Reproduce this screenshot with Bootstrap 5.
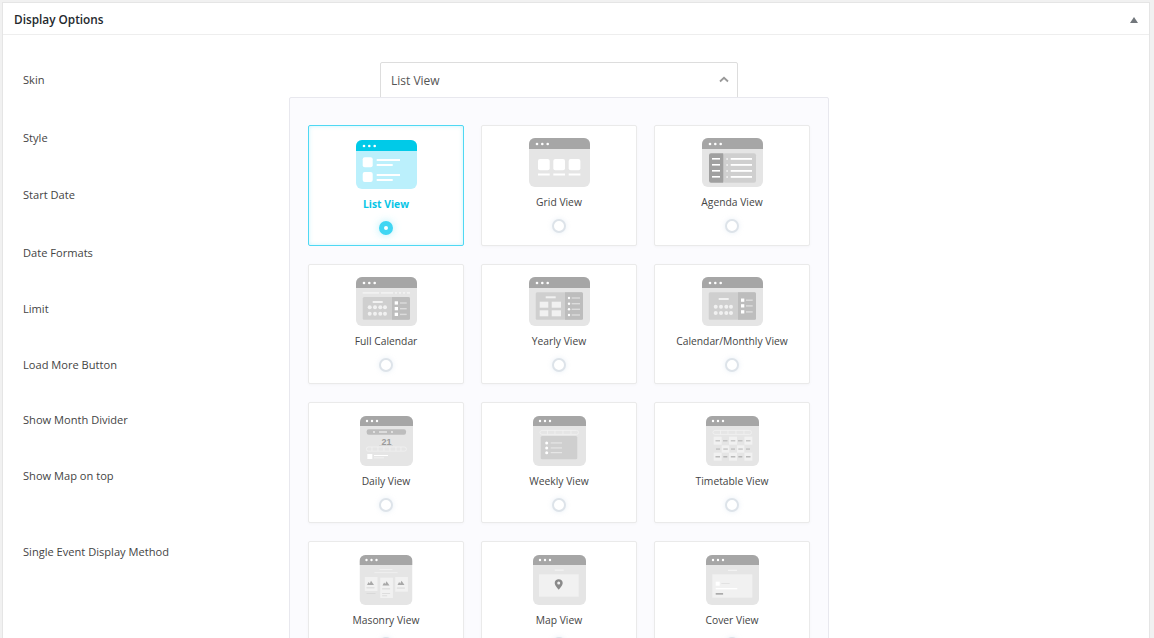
<!DOCTYPE html>
<html lang="en">
<head>
<meta charset="utf-8">
<title>Display Options</title>
<link href="https://cdn.jsdelivr.net/npm/bootstrap@5.3.0/dist/css/bootstrap.min.css" rel="stylesheet">
<style>
html,body{height:638px;overflow:hidden}
body{background:#f1f1f1;font-family:"Open Sans",Lato,sans-serif;color:#444;font-size:11px;padding:2px 4px 0 2px}
.opt-panel{background:#fff;border:1px solid #e5e5e5;height:700px;position:relative;border-radius:0}
.opt-head{height:32px;border-bottom:1px solid #eee;padding:2px 11px 0;display:flex;align-items:center;justify-content:space-between}
.opt-title{font-size:11.8px;font-weight:600;color:#23282d}
.opt-tri{width:0;height:0;border-left:4px solid transparent;border-right:4px solid transparent;border-bottom:6px solid #72777c;margin-right:0}
.opt-body{padding:36px 0 0 20px}
.opt-row{font-size:11.1px;line-height:17px;color:#444}
.r1{height:58px}.r2{height:57px}.r3{height:58px}.r4{height:56px}.r5{height:56px}.r6{height:55px}.r7{height:56px}.r8{height:76px}
.sel-box{position:absolute;left:377px;top:59px;width:358px;height:44px;border:1px solid #ddd;border-radius:2px;padding:8px 10px;font-size:12px;line-height:19px;color:#555;background:#fff}
.sel-caret{position:absolute;right:8px;top:13px}
.pop-menu{position:absolute;left:286px;top:94px;width:540px;height:620px;background:#fbfbfe;border:1px solid #e8e8ee;border-radius:2px;padding:27px 18px;display:grid;grid-template-columns:repeat(3,156px);column-gap:17px;row-gap:18px;grid-auto-rows:120.7px}
.sk-card{background:#fff;border:1px solid #eaeaea;border-radius:2px;box-shadow:0 1px 3px rgba(0,0,0,.03);display:flex;flex-direction:column;align-items:center;padding-top:12px;font-size:10.3px;color:#444}
.sk-card svg{display:block;height:49px;flex:none}
.sk-tall{padding-top:13px}
.sk-card.sk-tall svg{height:50px}
.sk-name{margin-top:7px;line-height:17px;white-space:nowrap;height:17px}
.sk-radio{width:14px;height:14px;border:2px solid #dde3e9;border-radius:50%;margin-top:8px;background:#fff;box-shadow:0 0 5px rgba(190,205,225,.35)}
.sk-on{border-color:#4fd8f3;box-shadow:inset 0 0 4px rgba(79,216,243,.3);padding-top:14px}
.sk-on .sk-name{color:#07c5e6;font-weight:700}
.sk-on .sk-radio{border:5px solid #40d6f3;background:#fff;box-shadow:0 0 8px rgba(64,214,243,.4)}
.i-bg{fill:#e5e5e5}.i-hd{fill:#a6a6a6}.i-w{fill:#fff}
.i-m{fill:#cfcfcf}.i-d{fill:#bdbdbd}.i-l{fill:#f1f1f1}
.i21{font-family:"Liberation Sans",sans-serif;font-size:9px;font-weight:700;fill:#9a9a9a;text-anchor:middle}
</style>
</head>
<body>
<svg width="0" height="0" class="position-absolute">
  <symbol id="w61" viewBox="0 0 61 49"><rect class="i-bg" width="61" height="49" rx="6"/><path class="i-hd" d="M0 11V6a6 6 0 0 1 6-6h49a6 6 0 0 1 6 6v5z"/><circle class="i-w" cx="8" cy="6" r="1.3"/><circle class="i-w" cx="13.3" cy="6" r="1.3"/><circle class="i-w" cx="18.7" cy="6" r="1.3"/></symbol>
  <symbol id="w53" viewBox="0 0 53 50"><rect class="i-bg" width="53" height="50" rx="6"/><path class="i-hd" d="M0 10V6a6 6 0 0 1 6-6h41a6 6 0 0 1 6 6v4z"/><circle class="i-w" cx="7" cy="5" r="1.2"/><circle class="i-w" cx="12" cy="5" r="1.2"/><circle class="i-w" cx="17" cy="5" r="1.2"/></symbol>
  <symbol id="cells" viewBox="0 0 53 50"><g fill="none" stroke="#f1f1f1" stroke-width=".8"><rect x="7" y="14.4" width="38.5" height="4" rx="2"/><path d="M14.5 14.4v4M22 14.4v4M30 14.4v4M38 14.4v4"/></g></symbol>
</svg>
<div class="card opt-panel">
  <div class="opt-head"><span class="opt-title">Display Options</span><span class="opt-tri"></span></div>
  <div class="opt-body">
    <div class="opt-row r1">Skin</div>
    <div class="opt-row r2">Style</div>
    <div class="opt-row r3">Start Date</div>
    <div class="opt-row r4">Date Formats</div>
    <div class="opt-row r5">Limit</div>
    <div class="opt-row r6">Load More Button</div>
    <div class="opt-row r7">Show Month Divider</div>
    <div class="opt-row r8">Show Map on top</div>
    <div class="opt-row">Single Event Display Method</div>
  </div>
  <div class="sel-box">List View
    <svg class="sel-caret" width="10" height="7" viewBox="0 0 10 7"><path d="M1 5.5 5 1.8l4 3.7" fill="none" stroke="#999" stroke-width="1.8"/></svg>
  </div>
  <div class="pop-menu">
    <div class="sk-card sk-on">
      <svg width="61" height="49" viewBox="0 0 61 49">
        <rect width="61" height="49" rx="6" fill="#bbf0fc"/><path fill="#00cae8" d="M0 11V6a6 6 0 0 1 6-6h49a6 6 0 0 1 6 6v5z"/>
        <g class="i-w"><circle cx="8" cy="6" r="1.3"/><circle cx="13.3" cy="6" r="1.3"/><circle cx="18.7" cy="6" r="1.3"/>
        <rect x="6.7" y="17.3" width="10" height="10" rx="2"/><rect x="6.7" y="32" width="10" height="10" rx="2"/>
        <rect x="20.7" y="19" width="23.3" height="2"/><rect x="20.7" y="24" width="16" height="2"/><rect x="20.7" y="34" width="23.3" height="2"/><rect x="20.7" y="39" width="16" height="2"/></g>
      </svg>
      <div class="sk-name">List View</div><div class="sk-radio"></div>
    </div>
    <div class="sk-card">
      <svg width="61" height="49" viewBox="0 0 61 49"><use href="#w61"/>
        <g class="i-w"><rect x="9" y="21" width="11.7" height="11.3" rx="2"/><rect x="24.3" y="21" width="11.7" height="11.3" rx="2"/><rect x="39.7" y="21" width="11.7" height="11.3" rx="2"/>
        <rect x="9" y="35.5" width="11.7" height="2"/><rect x="24.3" y="35.5" width="11.7" height="2"/><rect x="39.7" y="35.5" width="11.7" height="2"/></g>
      </svg>
      <div class="sk-name">Grid View</div><div class="sk-radio"></div>
    </div>
    <div class="sk-card">
      <svg width="61" height="49" viewBox="0 0 61 49"><use href="#w61"/>
        <rect x="21" y="15.3" width="33" height="29.4" rx="2" class="i-m"/><path fill="#a0a0a0" d="M9 15.3h12.3v29.4H9a2 2 0 0 1-2-2V17.3a2 2 0 0 1 2-2z"/>
        <g class="i-w"><rect x="10" y="20" width="8" height="1.6"/><rect x="10" y="26" width="8" height="1.6"/><rect x="10" y="32" width="8" height="1.6"/><rect x="10" y="38" width="8" height="1.6"/>
        <rect x="24.4" y="20.3" width="1.4" height="1.4"/><rect x="24.4" y="26.3" width="1.4" height="1.4"/><rect x="24.4" y="32.3" width="1.4" height="1.4"/><rect x="24.4" y="38.3" width="1.4" height="1.4"/>
        <rect x="28.7" y="20" width="21.3" height="1.8"/><rect x="28.7" y="26" width="21.3" height="1.8"/><rect x="28.7" y="32" width="21.3" height="1.8"/><rect x="28.7" y="38" width="21.3" height="1.8"/></g>
      </svg>
      <div class="sk-name">Agenda View</div><div class="sk-radio"></div>
    </div>

    <div class="sk-card">
      <svg width="61" height="49" viewBox="0 0 61 49"><use href="#w61"/>
        <rect x="6.7" y="15" width="47.3" height="1.8" class="i-l"/><path stroke="#cfcfcf" stroke-width=".6" d="M24 15v2M38 15v2M42 15v2M46 15v2M50 15v2"/>
        <rect x="6.7" y="20" width="47.3" height="22.7" rx="1.5" class="i-m"/><path class="i-d" d="M36 20h16.5a1.5 1.5 0 0 1 1.5 1.5v19.7a1.5 1.5 0 0 1-1.5 1.5H36z"/>
        <g class="i-l"><rect x="16.7" y="24" width="10" height="2"/>
        <circle cx="13.7" cy="30.3" r="2"/><circle cx="19" cy="30.3" r="2"/><circle cx="24.3" cy="30.3" r="2"/><circle cx="29" cy="30.3" r="2"/>
        <circle cx="13.7" cy="36.7" r="2"/><circle cx="19" cy="36.7" r="2"/><circle cx="24.3" cy="36.7" r="2"/><circle cx="29" cy="36.7" r="2"/></g>
        <g class="i-w"><rect x="38.7" y="24.3" width="3.3" height="3.3"/><rect x="38.7" y="30" width="3.3" height="3.3"/><rect x="38.7" y="35.7" width="3.3" height="3.3"/></g>
        <g fill="#dcdcdc"><rect x="44" y="25.3" width="6.7" height="1.4"/><rect x="44" y="31" width="6.7" height="1.4"/><rect x="44" y="36.7" width="6.7" height="1.4"/></g>
      </svg>
      <div class="sk-name">Full Calendar</div><div class="sk-radio"></div>
    </div>
    <div class="sk-card">
      <svg width="61" height="49" viewBox="0 0 61 49"><use href="#w61"/>
        <rect x="6.7" y="15.3" width="47.3" height="27.4" rx="1.5" class="i-m"/><path class="i-d" d="M36 15.3h16.5a1.5 1.5 0 0 1 1.5 1.5v24.4a1.5 1.5 0 0 1-1.5 1.5H36z"/>
        <g class="i-l"><rect x="16.7" y="19.3" width="10" height="2"/>
        <rect x="10.7" y="24.7" width="8.6" height="6"/><rect x="22.7" y="24.7" width="9.3" height="6"/><rect x="10.7" y="33.3" width="8.6" height="6"/><rect x="22.7" y="33.3" width="9.3" height="6"/></g>
        <g class="i-w"><circle cx="40" cy="21" r="1.2"/><circle cx="40" cy="26.7" r="1.2"/><circle cx="40" cy="32.3" r="1.2"/><circle cx="40" cy="38" r="1.2"/></g>
        <g fill="#dcdcdc"><rect x="42.7" y="20.3" width="8.3" height="1.4"/><rect x="42.7" y="26" width="8.3" height="1.4"/><rect x="42.7" y="31.6" width="8.3" height="1.4"/><rect x="42.7" y="37.3" width="8.3" height="1.4"/></g>
      </svg>
      <div class="sk-name">Yearly View</div><div class="sk-radio"></div>
    </div>
    <div class="sk-card">
      <svg width="61" height="49" viewBox="0 0 61 49"><use href="#w61"/>
        <rect x="6.7" y="15.3" width="47.3" height="27.4" rx="1.5" class="i-m"/><path class="i-d" d="M36 15.3h16.5a1.5 1.5 0 0 1 1.5 1.5v24.4a1.5 1.5 0 0 1-1.5 1.5H36z"/>
        <g class="i-l"><rect x="16.7" y="21" width="10" height="2"/>
        <circle cx="13.7" cy="29.7" r="2"/><circle cx="19" cy="29.7" r="2"/><circle cx="24.3" cy="29.7" r="2"/><circle cx="29" cy="29.7" r="2"/>
        <circle cx="13.7" cy="36" r="2"/><circle cx="19" cy="36" r="2"/><circle cx="24.3" cy="36" r="2"/><circle cx="29" cy="36" r="2"/></g>
        <g class="i-w"><rect x="39" y="21.5" width="3.3" height="3.3"/><rect x="39" y="27.2" width="3.3" height="3.3"/><rect x="39" y="33.2" width="3.3" height="3.3"/></g>
        <g fill="#dcdcdc"><rect x="44" y="22.5" width="6.7" height="1.4"/><rect x="44" y="28.2" width="6.7" height="1.4"/><rect x="44" y="34.2" width="6.7" height="1.4"/></g>
      </svg>
      <div class="sk-name">Calendar/Monthly View</div><div class="sk-radio"></div>
    </div>

    <div class="sk-card sk-tall">
      <svg width="53" height="50" viewBox="0 0 53 50"><use href="#w53"/>
        <rect x="6.7" y="13.3" width="39.3" height="5.4" rx="2" class="i-d"/>
        <g class="i-l"><circle cx="14" cy="16" r=".9"/><rect x="19" y="15.4" width="8" height="1.2"/><circle cx="32" cy="16" r=".9"/></g>
        <text class="i21" x="26.5" y="28.6">21</text>
        <rect x="19" y="29.4" width="14" height=".6" fill="#cfcfcf"/>
        <g fill="none" stroke="#f1f1f1" stroke-width=".8"><rect x="6.4" y="31" width="40" height="4.2" rx="2"/><path d="M12 31v4.2M18 31v4.2M24 31v4.2M30 31v4.2M36 31v4.2M41 31v4.2"/></g>
        <rect x="7.3" y="38" width="5" height="5" class="i-w"/><rect x="14" y="39" width="14" height="1" class="i-w"/><rect x="14" y="41.3" width="10" height="1" fill="#f1f1f1"/>
      </svg>
      <div class="sk-name">Daily View</div><div class="sk-radio"></div>
    </div>
    <div class="sk-card sk-tall">
      <svg width="53" height="50" viewBox="0 0 53 50"><use href="#w53"/><use href="#cells"/>
        <rect x="7.7" y="20" width="36.6" height="23.3" rx="1.5" class="i-m"/>
        <g class="i-w"><circle cx="13.7" cy="27" r="1.5"/><circle cx="13.7" cy="32" r="1.5"/><circle cx="13.7" cy="36.7" r="1.5"/></g>
        <g fill="#e8e8e8"><rect x="17.7" y="26.4" width="11.3" height="1.1"/><rect x="17.7" y="31.4" width="11.3" height="1.1"/><rect x="17.7" y="36.1" width="11.3" height="1.1"/></g>
      </svg>
      <div class="sk-name">Weekly View</div><div class="sk-radio"></div>
    </div>
    <div class="sk-card sk-tall">
      <svg width="53" height="50" viewBox="0 0 53 50"><use href="#w53"/><use href="#cells"/>
        <g fill="#f1f1f1"><rect x="7.7" y="20.7" width="8" height="8"/><rect x="23" y="20.7" width="8" height="8"/><rect x="38.4" y="20.7" width="8" height="8"/><rect x="15.7" y="29.3" width="7.6" height="7.4"/><rect x="31" y="29.3" width="7.4" height="7.4"/><rect x="7.7" y="36.7" width="8" height="8"/><rect x="23" y="36.7" width="8" height="8"/><rect x="38.4" y="36.7" width="8" height="8"/></g>
        <g fill="#adadad"><rect x="9.5" y="24.4" width="4.5" height=".9"/><rect x="17" y="24.4" width="4.5" height=".9"/><rect x="24.8" y="24.4" width="4.5" height=".9"/><rect x="32" y="24.4" width="4.5" height=".9"/><rect x="40" y="24.4" width="4.5" height=".9"/>
        <rect x="10" y="32.6" width="4" height=".9"/><rect x="17.3" y="32.6" width="4.5" height=".9"/><rect x="25" y="32.6" width="4" height=".9"/><rect x="32.3" y="32.6" width="4.5" height=".9"/><rect x="40" y="32.6" width="4" height=".9"/>
        <rect x="9.5" y="40.2" width="4.5" height="1.2"/><rect x="17.3" y="40.2" width="4" height="1.2"/><rect x="24.8" y="40.2" width="4.5" height="1.2"/><rect x="32.3" y="40.2" width="4" height="1.2"/><rect x="40" y="40.2" width="4.5" height="1.2"/></g>
      </svg>
      <div class="sk-name">Timetable View</div><div class="sk-radio"></div>
    </div>

    <div class="sk-card sk-tall">
      <svg width="54" height="50" viewBox="0 0 53 50"><use href="#w53"/>
        <rect x="20" y="14" width="13" height=".8" fill="#f3f3f3"/><rect x="15" y="17.4" width="23" height=".7" fill="#f3f3f3"/>
        <g class="i-l"><rect x="5.3" y="22" width="12.7" height="14"/><rect x="20.7" y="22.7" width="12.7" height="20.3"/><rect x="35.7" y="22" width="12.7" height="14.7"/></g>
        <g fill="#a8a8a8"><path d="M7.5 30l1.6-3 1.2 1.6 1.2-2.8 3 4.2z"/><path d="M23 30.5l1.6-3 1.2 1.6 1.2-2.8 3 4.2z"/><path d="M38 30l1.6-3 1.2 1.6 1.2-2.8 3 4.2z"/></g>
        <g fill="#d4d4d4"><rect x="7" y="32.4" width="8" height=".9"/><rect x="7" y="38" width="9" height=".7"/><rect x="22.6" y="33.4" width="8" height=".9"/><rect x="22.6" y="38" width="8" height=".7"/><rect x="22.6" y="40.5" width="5" height=".7"/><rect x="37.4" y="32.6" width="8" height=".9"/></g>
      </svg>
      <div class="sk-name">Masonry View</div><div class="sk-radio"></div>
    </div>
    <div class="sk-card sk-tall">
      <svg width="53" height="50" viewBox="0 0 53 50"><use href="#w53"/>
        <rect x="21.7" y="14.6" width="9" height="1" fill="#f5f5f5"/>
        <rect x="6" y="19.3" width="39.7" height="22.4" class="i-l"/>
        <path fill="#8a8a8a" d="M25.7 24.2c-2.3 0-4 1.7-4 3.9 0 2.7 4 6.7 4 6.7s4-4 4-6.7c0-2.2-1.7-3.9-4-3.9zm0 5.4a1.5 1.5 0 1 1 0-3 1.5 1.5 0 0 1 0 3z"/>
      </svg>
      <div class="sk-name">Map View</div><div class="sk-radio"></div>
    </div>
    <div class="sk-card sk-tall">
      <svg width="53" height="50" viewBox="0 0 53 50"><use href="#w53"/>
        <rect x="22" y="14.8" width="9" height="1" fill="#f5f5f5"/>
        <rect x="6.3" y="19.3" width="40" height="23.4" class="i-l"/>
        <rect x="9.7" y="26.7" width="4" height="4" class="i-w"/><rect x="15.3" y="28" width="8.4" height="1" fill="#e2e2e2"/>
        <rect x="9.7" y="33" width="21.6" height="1.4" class="i-w"/>
        <rect x="9.7" y="38" width="7.4" height="1.7" fill="#ababab"/>
      </svg>
      <div class="sk-name">Cover View</div><div class="sk-radio"></div>
    </div>
  </div>
</div>
<script src="https://cdn.jsdelivr.net/npm/bootstrap@5.3.0/dist/js/bootstrap.bundle.min.js"></script>
</body>
</html>
